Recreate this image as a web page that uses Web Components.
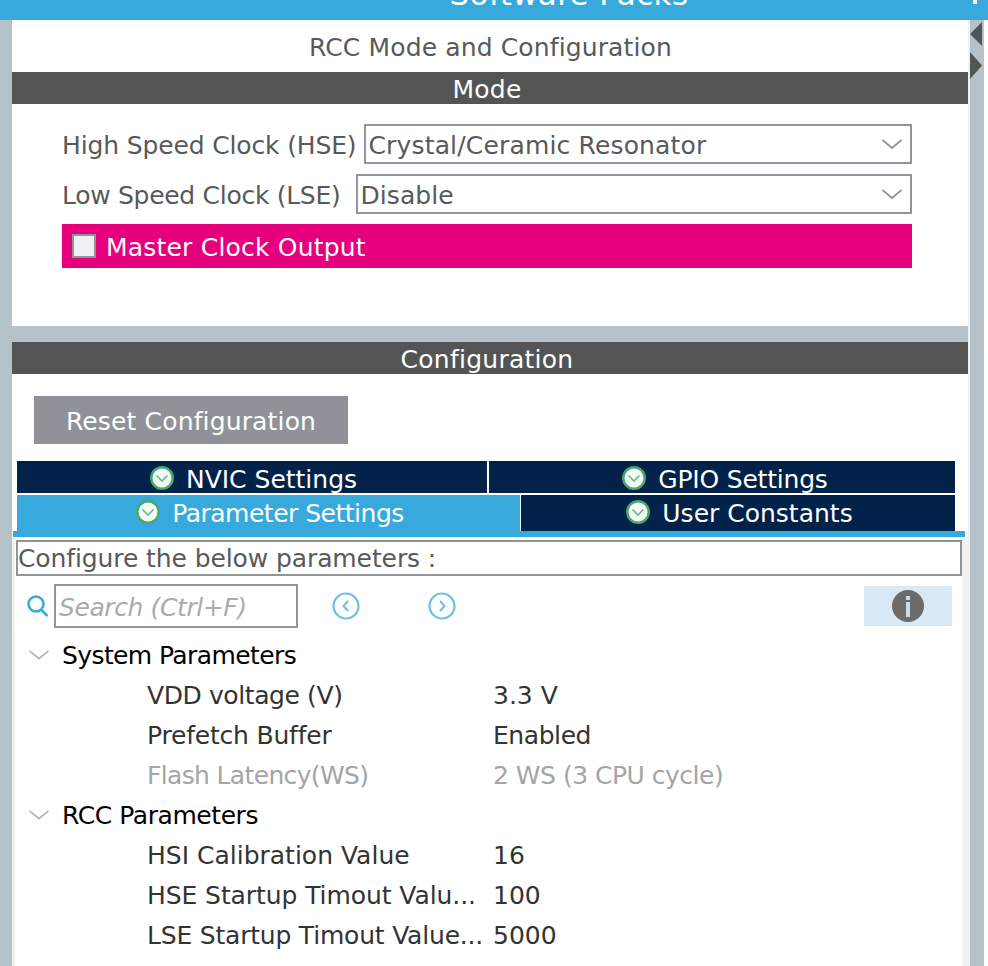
<!DOCTYPE html>
<html>
<head>
<meta charset="utf-8">
<style>
    html, body { margin: 0; padding: 0; height: 966px; overflow: hidden; background: #fff; }
    body { font-family: "DejaVu Sans", sans-serif; }
</style>
</head>
<body>
<rcc-app></rcc-app>

<script>
const CHECK_ICON = `<svg width="24" height="24" viewBox="0 0 24 24"><circle cx="12" cy="12" r="10.7" fill="#f6faf7" stroke="#46a96f" stroke-width="2.500"/><path d="M6.500 9.500l5.500 5.500 5.500-5.500" fill="none" stroke="#6cbb8e" stroke-width="1.700"/></svg>`;
const CHEVRON_ICON = `<svg width="20" height="11" viewBox="0 0 20 11"><path d="M0.500 1l9.500 8L19.500 1" fill="none" stroke="#8f9599" stroke-width="1.800"/></svg>`;

class SectionBar extends HTMLElement
{
    constructor()
    {
        super();
        this.attachShadow({ mode: 'open' });
        this.shadowRoot.innerHTML = `
            <style>
                :host {
                    display: flex;
                    align-items: center;
                    justify-content: center;
                    box-sizing: border-box;
                    height: 32px;
                    padding: 2px 6px 0 0;
                    background: #535554;
                    color: #fff;
                    font-size: 25px;
                    letter-spacing: .25px;
                }
            </style>
            <slot></slot>
        `;
    }
}

class SelectRow extends HTMLElement
{
    constructor()
    {
        super();
        this.attachShadow({ mode: 'open' });
        const label = this.getAttribute('label');
        const value = this.getAttribute('value');
        this.shadowRoot.innerHTML = `
            <style>
                :host { display: flex; align-items: center; height: 40px; font-size: 25px; color: #58595b; }
                .label { white-space: nowrap; padding-top: 2px; margin-right: var(--label-gap, 8px); letter-spacing: var(--label-ls, 0); }
                .box {
                    flex: 1;
                    height: 40px;
                    box-sizing: border-box;
                    border: 2px solid #8f9599;
                    display: flex;
                    align-items: center;
                    justify-content: space-between;
                    padding: 0 8px 0 2px;
                    background: #fff;
                }
                .value { padding-top: 2px; letter-spacing: var(--value-ls, 0); }
            </style>
            <span class="label">${label}</span>
            <div class="box"><span class="value">${value}</span>${CHEVRON_ICON}</div>
        `;
    }
}

class CheckRow extends HTMLElement
{
    constructor()
    {
        super();
        this.attachShadow({ mode: 'open' });
        this.shadowRoot.innerHTML = `
            <style>
                :host {
                    display: flex;
                    align-items: center;
                    height: 44px;
                    padding-left: 10px;
                    gap: 10px;
                    background: #e6007e;
                    color: #fff;
                    font-size: 25px;
                    letter-spacing: .2px;
                }
                .box { width: 24px; height: 24px; box-sizing: border-box; border: 2px solid #8f9599; background: #eff1f4; }
                span { padding-top: 2px; }
            </style>
            <div class="box"></div>
            <span><slot></slot></span>
        `;
    }
}

class TabBar extends HTMLElement
{
    constructor()
    {
        super();
        this.attachShadow({ mode: 'open' });
        this.shadowRoot.innerHTML = `
            <style>
                :host { display: block; margin-top: 17px; font-size: 25px; color: #fff; }
                .row { display: grid; margin: 0 13px 0 5px; }
                .top { grid-template-columns: 470px 1fr; column-gap: 2px; grid-template-rows: 32px; margin-bottom: 2px; }
                .bottom { grid-template-columns: 503px 1fr; column-gap: 1px; grid-template-rows: 36px; }
                .tab { display: flex; align-items: center; justify-content: center; gap: 12px; box-sizing: border-box; padding-left: 3px; background: #022249; }
                .top .tab { padding-top: 4px; }
                .top .tab svg { margin-top: -2px; }
                .bottom svg { margin-top: -2px; }
                .active { background: #38a9dc; height: 42px; align-items: flex-start; }
                .active span { line-height: 36px; padding-top: 1px; }
                .active svg { margin-top: 5px; }
                .line { height: 6px; margin: 0 3px 0 1px; background: #38a9dc; }
            </style>
            <div class="row top">
                <div class="tab">${CHECK_ICON}<span>NVIC Settings</span></div>
                <div class="tab" style="padding-left:6px">${CHECK_ICON}<span style="letter-spacing:-.2px">GPIO Settings</span></div>
            </div>
            <div class="row bottom">
                <div class="tab active">${CHECK_ICON}<span style="letter-spacing:-.5px">Parameter Settings</span></div>
                <div class="tab">${CHECK_ICON}<span>User Constants</span></div>
            </div>
            <div class="line"></div>
        `;
    }
}

class SearchBar extends HTMLElement
{
    constructor()
    {
        super();
        this.attachShadow({ mode: 'open' });
        this.shadowRoot.innerHTML = `
            <style>
                :host { display: flex; align-items: center; height: 44px; margin-top: 8px; padding-left: 11px; }
                .field {
                    width: 244px;
                    height: 44px;
                    box-sizing: border-box;
                    border: 2px solid #8f9599;
                    margin-left: 4px;
                    padding: 2px 0 0 3px;
                    display: flex;
                    align-items: center;
                    font-size: 25px;
                    font-style: italic;
                    letter-spacing: -.4px;
                    color: #a9abad;
                }
                .prev { margin-left: 34px; }
                .next { margin-left: 68px; }
                .info {
                    margin-left: auto;
                    margin-right: 10px;
                    width: 88px;
                    height: 40px;
                    background: #d9e8f5;
                    display: flex;
                    align-items: center;
                    justify-content: center;
                }
            </style>
            <svg width="24" height="26" viewBox="0 0 24 26"><circle cx="10" cy="11" r="7.500" fill="none" stroke="#38a9dc" stroke-width="2.500"/><path d="M15.500 17l6 6" stroke="#38a9dc" stroke-width="2.500"/></svg>
            <div class="field">Search (Ctrl+F)</div>
            <svg class="prev" width="28" height="28" viewBox="0 0 28 28"><circle cx="14" cy="14" r="12.500" fill="none" stroke="#6cbfe6" stroke-width="2.200"/><path d="M16 9l-4.500 5 4.500 5" fill="none" stroke="#6cbfe6" stroke-width="2"/></svg>
            <svg class="next" width="28" height="28" viewBox="0 0 28 28"><circle cx="14" cy="14" r="12.500" fill="none" stroke="#6cbfe6" stroke-width="2.200"/><path d="M12 9l4.500 5-4.500 5" fill="none" stroke="#6cbfe6" stroke-width="2"/></svg>
            <div class="info">
                <svg width="32" height="32" viewBox="0 0 32 32"><circle cx="16" cy="16" r="16" fill="#6b6b6b"/><rect x="14" y="6" width="4" height="4" fill="#c8dcec"/><rect x="14" y="12" width="4" height="15" fill="#c8dcec"/></svg>
            </div>
        `;
    }
}

class ParamGroup extends HTMLElement
{
    constructor()
    {
        super();
        this.attachShadow({ mode: 'open' });
        const title = this.getAttribute('title');
        this.shadowRoot.innerHTML = `
            <style>
                :host { display: block; font-size: 25px; color: #000; }
                .head { display: flex; align-items: center; height: 40px; padding-left: 14px; gap: 13px; }
                .head span { letter-spacing: var(--title-ls, 0); }
            </style>
            <div class="head">
                <svg width="20" height="10" viewBox="0 0 20 10"><path d="M0.500 1l9.500 7.500L19.500 1" fill="none" stroke="#a5a8ab" stroke-width="1.500"/></svg>
                <span>${title}</span>
            </div>
            <slot></slot>
        `;
    }
}

class ParamRow extends HTMLElement
{
    constructor()
    {
        super();
        this.attachShadow({ mode: 'open' });
        const disabled = this.hasAttribute('disabled');
        this.shadowRoot.innerHTML = `
            <style>
                :host {
                    display: grid;
                    grid-template-columns: 346px 1fr;
                    align-items: center;
                    height: 40px;
                    padding-left: 132px;
                    font-size: 25px;
                    color: ${disabled ? '#a3a5a7' : '#333'};
                    white-space: nowrap;
                }
                .name { letter-spacing: var(--name-ls, 0); }
                .value { letter-spacing: var(--value-ls, 0); }
            </style>
            <span class="name">${this.getAttribute('name')}</span>
            <span class="value">${this.getAttribute('value')}</span>
        `;
    }
}

class RccApp extends HTMLElement
{
    constructor()
    {
        super();
        this.attachShadow({ mode: 'open' });
        this.shadowRoot.innerHTML = `
            <style>
                :host { display: block; height: 966px; overflow: hidden; color: #58595b; font-family: "DejaVu Sans", sans-serif; }
                .topbar {
                    height: 20px;
                    box-sizing: border-box;
                    padding-left: 150px;
                    background: #38a9dc;
                    color: #fff;
                    display: flex;
                    align-items: flex-end;
                    justify-content: center;
                    font-size: 31px;
                    letter-spacing: .35px;
                    overflow: hidden;
                    position: relative;
                }
                .topbar span { line-height: 30px; margin-bottom: 11px; flex: none; }
                .topbar i { position: absolute; left: 973px; top: 0; width: 4px; height: 4px; background: #fff; }
                .main { display: grid; grid-template-columns: 12px 956px 2px 14px 4px; height: 946px; }
                .gutter, .rail { background: #b6c2c9; }
                .stripe { background: #f0f1f3; }
                .panel { display: flex; flex-direction: column; min-width: 0; }
                .title {
                    height: 52px;
                    box-sizing: border-box;
                    padding: 2px 0 0 1px;
                    display: flex;
                    align-items: center;
                    justify-content: center;
                    font-size: 25px;
                    letter-spacing: .13px;
                    background: #fff;
                }
                .mode { background: #fff; height: 222px; box-sizing: border-box; padding: 20px 56px 0 50px; }
                .mode select-row + select-row { margin-top: 10px; }
                check-row { margin-top: 10px; }
                .gap { height: 16px; background: #b6c2c9; }
                .config { background: #fff; flex: 1; box-sizing: border-box; padding-top: 22px; display: flex; flex-direction: column; }
                .reset {
                    margin-left: 22px;
                    width: 314px;
                    height: 48px;
                    box-sizing: border-box;
                    padding-top: 2px;
                    background: #8f9399;
                    color: #fff;
                    font-size: 25px;
                    letter-spacing: .15px;
                    display: flex;
                    align-items: center;
                    justify-content: center;
                }
                .sheet { flex: 1; background: #fff; border-right: 6px solid #f0f1f3; border-left: 3px solid #f0f1f3; }
                .sheet-title {
                    height: 36px;
                    box-sizing: border-box;
                    margin: 3px 0 0 1px;
                    border: 2px solid #8f9599;
                    display: flex;
                    align-items: center;
                    font-size: 25px;
                    letter-spacing: -.1px;
                    white-space: nowrap;
                }
                .params { margin-top: 7px; }
                .rail { display: flex; flex-direction: column; gap: 6px; padding-top: 2px; }
            </style>
            <div class="topbar"><span>Software Packs</span><i></i></div>
            <div class="main">
                <div class="gutter"></div>
                <div class="panel">
                    <div class="title">RCC Mode and Configuration</div>
                    <section-bar>Mode</section-bar>
                    <div class="mode">
                        <select-row style="--label-ls:-.14px;--value-ls:.16px" label="High Speed Clock (HSE)" value="Crystal/Ceramic Resonator"></select-row>
                        <select-row style="--label-ls:-.29px;--label-gap:16px;--value-ls:.1px" label="Low Speed Clock (LSE)" value="Disable"></select-row>
                        <check-row>Master Clock Output</check-row>
                    </div>
                    <div class="gap"></div>
                    <section-bar>Configuration</section-bar>
                    <div class="config">
                        <div class="reset">Reset Configuration</div>
                        <tab-bar></tab-bar>
                        <div class="sheet">
                            <div class="sheet-title">Configure the below parameters :</div>
                            <search-bar></search-bar>
                            <div class="params">
                                <param-group style="--title-ls:-.6px" title="System Parameters">
                                    <param-row style="--name-ls:-.4px" name="VDD voltage (V)" value="3.3 V"></param-row>
                                    <param-row style="--name-ls:-.2px;--value-ls:-.43px" name="Prefetch Buffer" value="Enabled"></param-row>
                                    <param-row style="--name-ls:-.65px;--value-ls:-.5px" name="Flash Latency(WS)" value="2 WS (3 CPU cycle)" disabled></param-row>
                                </param-group>
                                <param-group style="--title-ls:-.43px" title="RCC Parameters">
                                    <param-row name="HSI Calibration Value" value="16"></param-row>
                                    <param-row style="--name-ls:-.08px" name="HSE Startup Timout Valu..." value="100"></param-row>
                                    <param-row style="--name-ls:-.2px" name="LSE Startup Timout Value..." value="5000"></param-row>
                                </param-group>
                            </div>
                        </div>
                    </div>
                </div>
                <div class="stripe"></div>
                <div class="rail">
                    <svg width="12" height="24" viewBox="0 0 12 24"><path d="M12 0L0 12l12 12z" fill="#535554"/></svg>
                    <svg width="12" height="27" viewBox="0 0 12 27"><path d="M0 0l12 13.500L0 27z" fill="#535554"/></svg>
                </div>
                <div></div>
            </div>
        `;
    }
}

customElements.define('section-bar', SectionBar);
customElements.define('select-row', SelectRow);
customElements.define('check-row', CheckRow);
customElements.define('tab-bar', TabBar);
customElements.define('search-bar', SearchBar);
customElements.define('param-group', ParamGroup);
customElements.define('param-row', ParamRow);
customElements.define('rcc-app', RccApp);
</script>
</body>
</html>
